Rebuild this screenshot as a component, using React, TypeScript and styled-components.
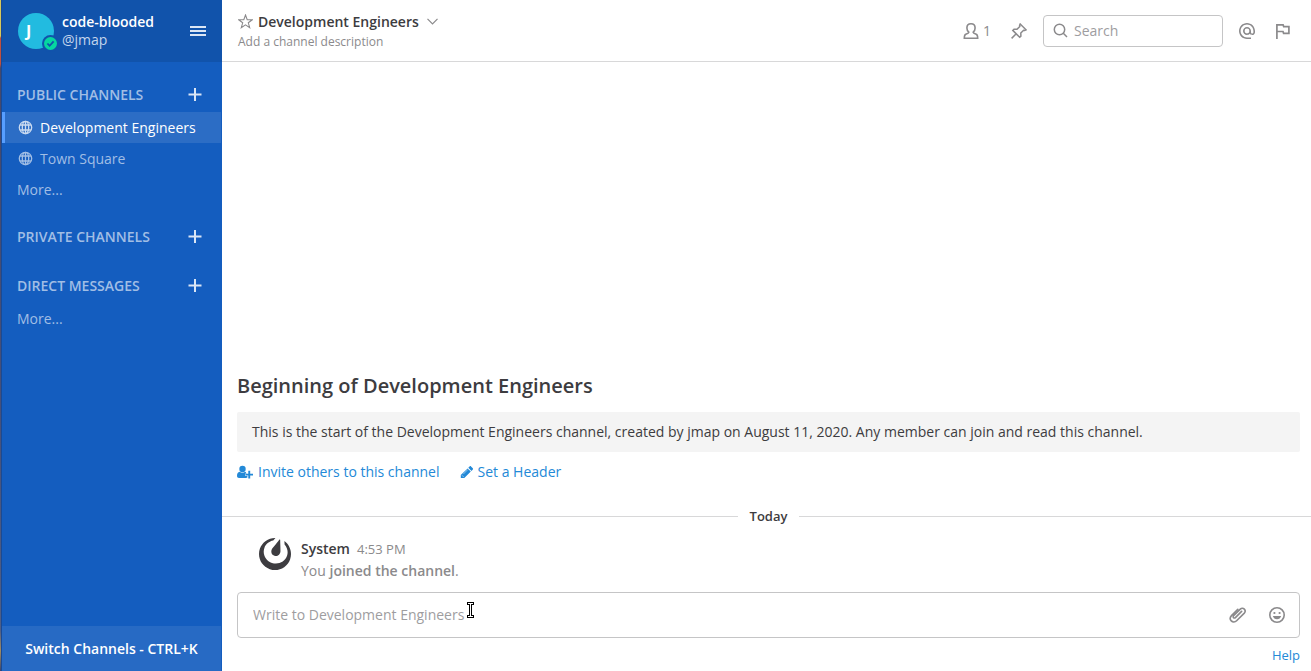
import React from "react";
import styled, { createGlobalStyle } from "styled-components";
import { SiMattermost } from "react-icons/si";

const Global = createGlobalStyle`
  *, *::before, *::after { box-sizing: border-box; }
  body {
    margin: 0;
    background: #fff;
    color: #3d3c40;
    font: 400 14px/20px "Open Sans", "Noto Sans", sans-serif;
  }
  button, input { font: inherit; color: inherit; }
  button { border: 0; padding: 0; background: none; cursor: pointer; }
  a { text-decoration: none; }
  h1, h2, h3, p { margin: 0; }
  svg { display: block; flex: none; }
`;

const Page = styled.div`
  display: flex;
  min-height: 100vh;
`;

const DesktopEdge = styled.div`
  width: 2px;
  flex: none;
  background: linear-gradient(#d8c95a 0, #d8c95a 36px, #c0503f 38px, #c0503f 64px, #46496b 68px, #46507a 60%, #4f5f86 94%, #a08a60 97%, #3a4670 100%);
  border-right: 1px solid #1a4a94;
`;

const Sidebar = styled.aside`
  display: flex;
  flex-direction: column;
  width: 220px;
  flex: none;
  background: #145dbf;
  color: #a1bee5;
`;

const TeamHeader = styled.header`
  display: flex;
  align-items: center;
  height: 62px;
  padding: 0 16px;
  gap: 8px;
  background: #1153ab;
`;

const Avatar = styled.div`
  position: relative;
  width: 36px;
  height: 36px;
  flex: none;
  border-radius: 50%;
  background: #22bbe0;
  color: #fff;
  font-size: 16px;
  font-weight: 700;
  line-height: 36px;
  padding-left: 8px;
`;

const Presence = styled.svg`
  position: absolute;
  right: -5px;
  bottom: -3px;
`;

const TeamNames = styled.div`
  flex: 1;
  line-height: 18px;
  color: #c4d5ec;
`;

const TeamName = styled.h1`
  font-size: 14px;
  font-weight: 600;
  line-height: 18px;
  color: #fff;
`;

const MenuButton = styled.button`
  color: #dbe6f5;
`;

const Channels = styled.nav`
  flex: 1;
  padding-top: 17px;
`;

const Section = styled.section`
  margin-bottom: 16px;
`;

const SectionHead = styled.div`
  display: flex;
  align-items: center;
  justify-content: space-between;
  height: 33px;
  padding: 0 20px 1px 15px;
`;

const SectionTitle = styled.h2`
  font-size: 14px;
  font-weight: 600;
  text-transform: uppercase;
`;

const AddButton = styled.button`
  color: #dbe6f5;
`;

const ChannelLink = styled.a<{ $active?: boolean }>`
  display: flex;
  align-items: center;
  gap: 7px;
  height: 31px;
  margin-right: 1px;
  padding-left: ${(p) => (p.$active ? 13 : 16)}px;
  border-left: ${(p) => (p.$active ? "3px solid #579eff" : "0")};
  background: ${(p) => (p.$active ? "#2c6dc5" : "transparent")};
  color: ${(p) => (p.$active ? "#fff" : "#a1bee5")};
  svg { opacity: ${(p) => (p.$active ? 0.75 : 1)}; }
`;

const MoreLink = styled.a`
  display: flex;
  align-items: center;
  height: 31px;
  padding-left: 15px;
  color: #a1bee5;
`;

const SwitchButton = styled.button`
  height: 45px;
  margin-right: 1px;
  background: #276ac4;
  color: #fff;
  font-weight: 600;
`;

const Main = styled.main`
  display: flex;
  flex-direction: column;
  flex: 1;
  min-width: 0;
`;

const ChannelHeader = styled.header`
  display: flex;
  align-items: center;
  height: 62px;
  padding: 0 21px 0 16px;
  border-bottom: 1px solid #d8d8d9;
  color: #8b8a8c;
`;

const ChannelInfo = styled.div`
  flex: 1;
  padding-top: 2px;
`;

const TitleRow = styled.div`
  display: flex;
  align-items: center;
  height: 20px;
  gap: 5px;
`;

const ChannelTitle = styled.h2`
  font-size: 14px;
  font-weight: 600;
  line-height: 20px;
  color: #3d3c40;
`;

const IconButton = styled.button`
  display: flex;
  align-items: center;
  color: #8b8a8c;
`;

const Chevron = styled(IconButton)`
  margin-left: 3px;
`;

const Description = styled.button`
  display: block;
  font-size: 12px;
  line-height: 20px;
  color: #8b8a8c;
`;

const Tools = styled.div`
  display: flex;
  align-items: center;
  gap: 16px;
`;

const Members = styled(IconButton)`
  gap: 4px;
  margin-right: 4px;
`;

const Flagged = styled(IconButton)`
  margin-left: 4px;
`;

const SearchBox = styled.label`
  display: flex;
  align-items: center;
  gap: 6px;
  width: 180px;
  height: 32px;
  padding: 0 9px;
  border: 1px solid #c5c5c6;
  border-radius: 4px;
`;

const TextInput = styled.input`
  flex: 1;
  min-width: 0;
  padding: 0;
  border: 0;
  outline: 0;
  background: transparent;
  &::placeholder { color: #9e9d9f; opacity: 1; }
`;

const Posts = styled.div`
  display: flex;
  flex-direction: column;
  justify-content: flex-end;
  flex: 1;
`;

const Intro = styled.section`
  padding: 0 11px 0 15px;
`;

const IntroTitle = styled.h2`
  font-size: 20px;
  font-weight: 600;
  line-height: 28px;
  margin-bottom: 12px;
`;

const IntroText = styled.p`
  padding: 10px 15px;
  border-radius: 2px;
  background: #f4f4f4;
`;

const IntroLinks = styled.div`
  display: flex;
  gap: 20px;
  margin-top: 10px;
`;

const IntroLink = styled.a`
  display: flex;
  align-items: center;
  gap: 5px;
  color: #2389d7;
`;

const DateLine = styled.div`
  display: flex;
  align-items: center;
  gap: 12px;
  margin-top: 24px;
  font-size: 13px;
  font-weight: 600;
  &::before, &::after {
    content: "";
    flex: 1 1 0;
    height: 1px;
    background: #d8d8d9;
  }
  &::before { flex-basis: 4px; }
`;

const Post = styled.article`
  display: flex;
  gap: 10px;
  padding: 12px 16px 10px 37px;
`;

const PostBody = styled.div`
  line-height: 22px;
  color: #8b8a8c;
`;

const Author = styled.button`
  font-weight: 600;
  color: #3d3c40;
`;

const Time = styled.time`
  margin-left: 7px;
  font-size: 13px;
`;

const Strong = styled.b`
  font-weight: 600;
`;

const Footer = styled.footer`
  padding: 0 11px 6px 15px;
`;

const MessageBox = styled.div`
  position: relative;
  display: flex;
  align-items: center;
  gap: 22px;
  height: 46px;
  padding: 0 14px 0 15px;
  border: 1px solid #c5c5c6;
  border-radius: 4px;
`;

const TextCursor = styled.svg`
  position: absolute;
  left: 229px;
  top: 9px;
`;

const HelpRow = styled.div`
  display: flex;
  justify-content: flex-end;
  margin-top: 7px;
  font-size: 13px;
`;

const HelpLink = styled.a`
  color: #2389d7;
`;

const Globe = () => (
  <svg width="15" height="15" viewBox="0 0 15 15" fill="none" stroke="currentColor" strokeWidth="1.3">
    <circle cx="7.5" cy="7.5" r="6.2" />
    <ellipse cx="7.5" cy="7.5" rx="3.2" ry="6.2" />
    <path d="M7.5 1.3v12.4M2.1 5h10.8M2.1 10h10.8" />
  </svg>
);

const Plus = () => (
  <svg width="14" height="14" viewBox="0 0 14 14" fill="currentColor">
    <path d="M6 0h2v5.400h5.500v2.200H8V13H6V7.600H.5V5.400H6z" />
  </svg>
);

const GroupHead = ({ title }: { title: string }) => (
  <SectionHead>
    <SectionTitle>{title}</SectionTitle>
    <AddButton aria-label={`Add to ${title}`}><Plus /></AddButton>
  </SectionHead>
);

export default function App() {
  return (
    <>
      <Global />
      <Page>
        <DesktopEdge />
        <Sidebar>
          <TeamHeader>
            <Avatar>
              J
              <Presence width="17" height="17" viewBox="0 0 17 17">
                <circle cx="8.5" cy="8.5" r="8.5" fill="#1153ab" />
                <circle cx="8.5" cy="8.5" r="6.5" fill="#06d6a0" />
                <path d="M5.4 8.5l2.2 2.3 4-4.4" fill="none" stroke="#1153ab" strokeWidth="1.8" />
              </Presence>
            </Avatar>
            <TeamNames>
              <TeamName>code-blooded</TeamName>
              @jmap
            </TeamNames>
            <MenuButton aria-label="Main menu">
              <svg width="16" height="10" viewBox="0 0 16 10" fill="currentColor">
                <path d="M0 0h16v2H0zM0 4h16v2H0zM0 8h16v2H0z" />
              </svg>
            </MenuButton>
          </TeamHeader>
          <Channels>
            <Section>
              <GroupHead title="Public Channels" />
              <ChannelLink $active href="#development"><Globe />Development Engineers</ChannelLink>
              <ChannelLink href="#town-square"><Globe />Town Square</ChannelLink>
              <MoreLink href="#more-public">More...</MoreLink>
            </Section>
            <Section>
              <GroupHead title="Private Channels" />
            </Section>
            <Section>
              <GroupHead title="Direct Messages" />
              <MoreLink href="#more-direct">More...</MoreLink>
            </Section>
          </Channels>
          <SwitchButton>Switch Channels - CTRL+K</SwitchButton>
        </Sidebar>
        <Main>
          <ChannelHeader>
            <ChannelInfo>
              <TitleRow>
                <IconButton aria-label="Favorite">
                  <svg width="15" height="15" viewBox="0 0 15 15" fill="none" stroke="currentColor" strokeWidth="1.1">
                    <path d="M7.5 1l1.7 4.6 5 .2-3.9 3 1.4 4.8-4.2-2.8-4.2 2.8 1.4-4.8-3.9-3 5-.2z" />
                  </svg>
                </IconButton>
                <ChannelTitle>Development Engineers</ChannelTitle>
                <Chevron aria-label="Channel menu">
                  <svg width="11" height="7" viewBox="0 0 11 7" fill="none" stroke="currentColor" strokeWidth="1.2">
                    <path d="M.5.8l5 5 5-5" />
                  </svg>
                </Chevron>
              </TitleRow>
              <Description>Add a channel description</Description>
            </ChannelInfo>
            <Tools>
              <Members aria-label="Members">
                <svg width="16" height="18" viewBox="0 0 16 18" fill="none" stroke="currentColor" strokeWidth="1.6">
                  <path d="M8 1.8c-2.500 0-4.100 1.600-4.100 4.200 0 1.700.7 3.200 1.900 4.200-.3 1.200-1.600 1.500-3 2C1.500 12.700 1.300 13.500 1.300 16.200h13.400c0-2.700-.2-3.500-1.500-4-1.400-.5-2.700-.8-3-2 1.200-1 1.900-2.500 1.900-4.200 0-2.600-1.600-4.200-4.100-4.200z" />
                </svg>
                1
              </Members>
              <IconButton aria-label="Pinned posts">
                <svg width="16" height="16" viewBox="0 0 16 16" fill="none" stroke="currentColor" strokeWidth="1.5">
                  <path d="M9.200 1l5.800 5.800-1.400.6-1-.2-2.800 2.900.1 3-1.200 1.200L1.800 7.400 3 6.200l3 .1 2.800-2.900-.2-1zM5.200 10.800L.6 15.400" />
                </svg>
              </IconButton>
              <SearchBox>
                <svg width="15" height="15" viewBox="0 0 15 15" fill="none" stroke="currentColor" strokeWidth="1.5">
                  <circle cx="6.500" cy="6.500" r="5.200" />
                  <path d="M10.300 10.300l3.700 3.700" />
                </svg>
                <TextInput aria-label="Search" placeholder="Search" />
              </SearchBox>
              <IconButton aria-label="Recent mentions">
                <svg width="16" height="16" viewBox="0 0 24 24" fill="currentColor">
                  <path d="M12 0C5.400 0 0 5.400 0 12s5.400 12 12 12h6v-2.400h-6c-5.200 0-9.600-4.400-9.600-9.600S6.800 2.400 12 2.400s9.600 4.400 9.600 9.600v1.700c0 1-.8 1.900-1.800 1.900S18 14.700 18 13.700V12c0-3.300-2.700-6-6-6s-6 2.700-6 6 2.700 6 6 6c1.700 0 3.200-.7 4.200-1.800.8 1.100 2.200 1.800 3.600 1.800 2.300 0 4.200-1.900 4.200-4.300V12c0-6.600-5.400-12-12-12zm0 15.600a3.600 3.600 0 1 1 0-7.200 3.600 3.600 0 0 1 0 7.200z" />
                </svg>
              </IconButton>
              <Flagged aria-label="Flagged posts">
                <svg width="15" height="16" viewBox="0 0 15 16" fill="none" stroke="currentColor" strokeWidth="1.7">
                  <path d="M1.900 16V1.800h6.200l.6 1.900h5.200v6.600H8.600L8 8.500H1.900" />
                </svg>
              </Flagged>
            </Tools>
          </ChannelHeader>
          <Posts>
            <Intro>
              <IntroTitle>Beginning of Development Engineers</IntroTitle>
              <IntroText>
                This is the start of the Development Engineers channel, created by jmap on August 11, 2020. Any member can join and read this channel.
              </IntroText>
              <IntroLinks>
                <IntroLink href="#invite">
                  <svg width="16" height="14" viewBox="0 0 16 14" fill="currentColor">
                    <circle cx="5.500" cy="4" r="3.200" />
                    <path d="M2.600 6.800C1 7 0 8.600 0 11c0 1.300.8 2 2 2h7c.7 0 1-.2 1.400-.5V11H8.200V8.400h1.200c-.3-.9-.7-1.500-1.200-1.600C6.500 8.200 4.400 8.200 2.600 6.800zM11.300 5.800h1.900v2.900H16v1.900h-2.800v2.900h-1.900v-2.900H8.600V8.700h2.700z" />
                  </svg>
                  Invite others to this channel
                </IntroLink>
                <IntroLink href="#set-header">
                  <svg width="13" height="14" viewBox="0 0 13 14" fill="currentColor">
                    <path d="M7.600 3.400l3.200 3.200-6.500 6.500H.8V9.900zM8.300 2.700l1.300-1.300c.4-.4 1-.4 1.400 0l1.800 1.800c.4.4.4 1 0 1.400l-1.300 1.300z" />
                    <path d="M1.900 10.200l1.900 1.900M3.300 9.100l4.400-4.400" stroke="#fff" strokeWidth=".5" />
                  </svg>
                  Set a Header
                </IntroLink>
              </IntroLinks>
            </Intro>
            <DateLine>Today</DateLine>
            <Post>
              <SiMattermost size={32} color="#3d3c40" />
              <PostBody>
                <div><Author>System</Author><Time>4:53 PM</Time></div>
                <p>You <Strong>joined the channel</Strong>.</p>
              </PostBody>
            </Post>
          </Posts>
          <Footer>
            <MessageBox>
              <TextInput aria-label="Message" placeholder="Write to Development Engineers" />
              <IconButton aria-label="Attach a file">
                <svg width="18" height="18" viewBox="0 0 18 18" fill="none" stroke="currentColor" strokeWidth="1.600" strokeLinecap="round">
                  <path d="M12.100 5.400l-6.200 6.200c-.6.600-1.400.6-1.900.1s-.5-1.300.1-1.900l6.700-6.700c1.200-1.200 2.900-1.200 4 0s1.100 2.800 0 4l-7.700 7.600c-1.600 1.600-3.900 1.700-5.300.2s-1.300-3.700.2-5.300L8.300 3.300" transform="translate(0.500 0)" />
                </svg>
              </IconButton>
              <IconButton aria-label="Emoji picker">
                <svg width="16" height="16" viewBox="0 0 16 16" fill="currentColor">
                  <circle cx="8" cy="8" r="7.200" fill="none" stroke="currentColor" strokeWidth="1.600" />
                  <circle cx="5.400" cy="6" r="1.100" />
                  <circle cx="10.600" cy="6" r="1.100" />
                  <path d="M3.800 9h8.400c-.6 2-2.200 3.300-4.200 3.300S4.400 11 3.800 9z" />
                </svg>
              </IconButton>
              <TextCursor width="7" height="16" viewBox="0 0 7 16">
                <path d="M0 0h7v3H5v10h2v3H0v-3h2V3H0z" fill="#000" />
                <path d="M1 1h5v1H4v12h2v1H1v-1h2V2H1z" fill="#fff" />
              </TextCursor>
            </MessageBox>
            <HelpRow><HelpLink href="#help">Help</HelpLink></HelpRow>
          </Footer>
        </Main>
      </Page>
    </>
  );
}
